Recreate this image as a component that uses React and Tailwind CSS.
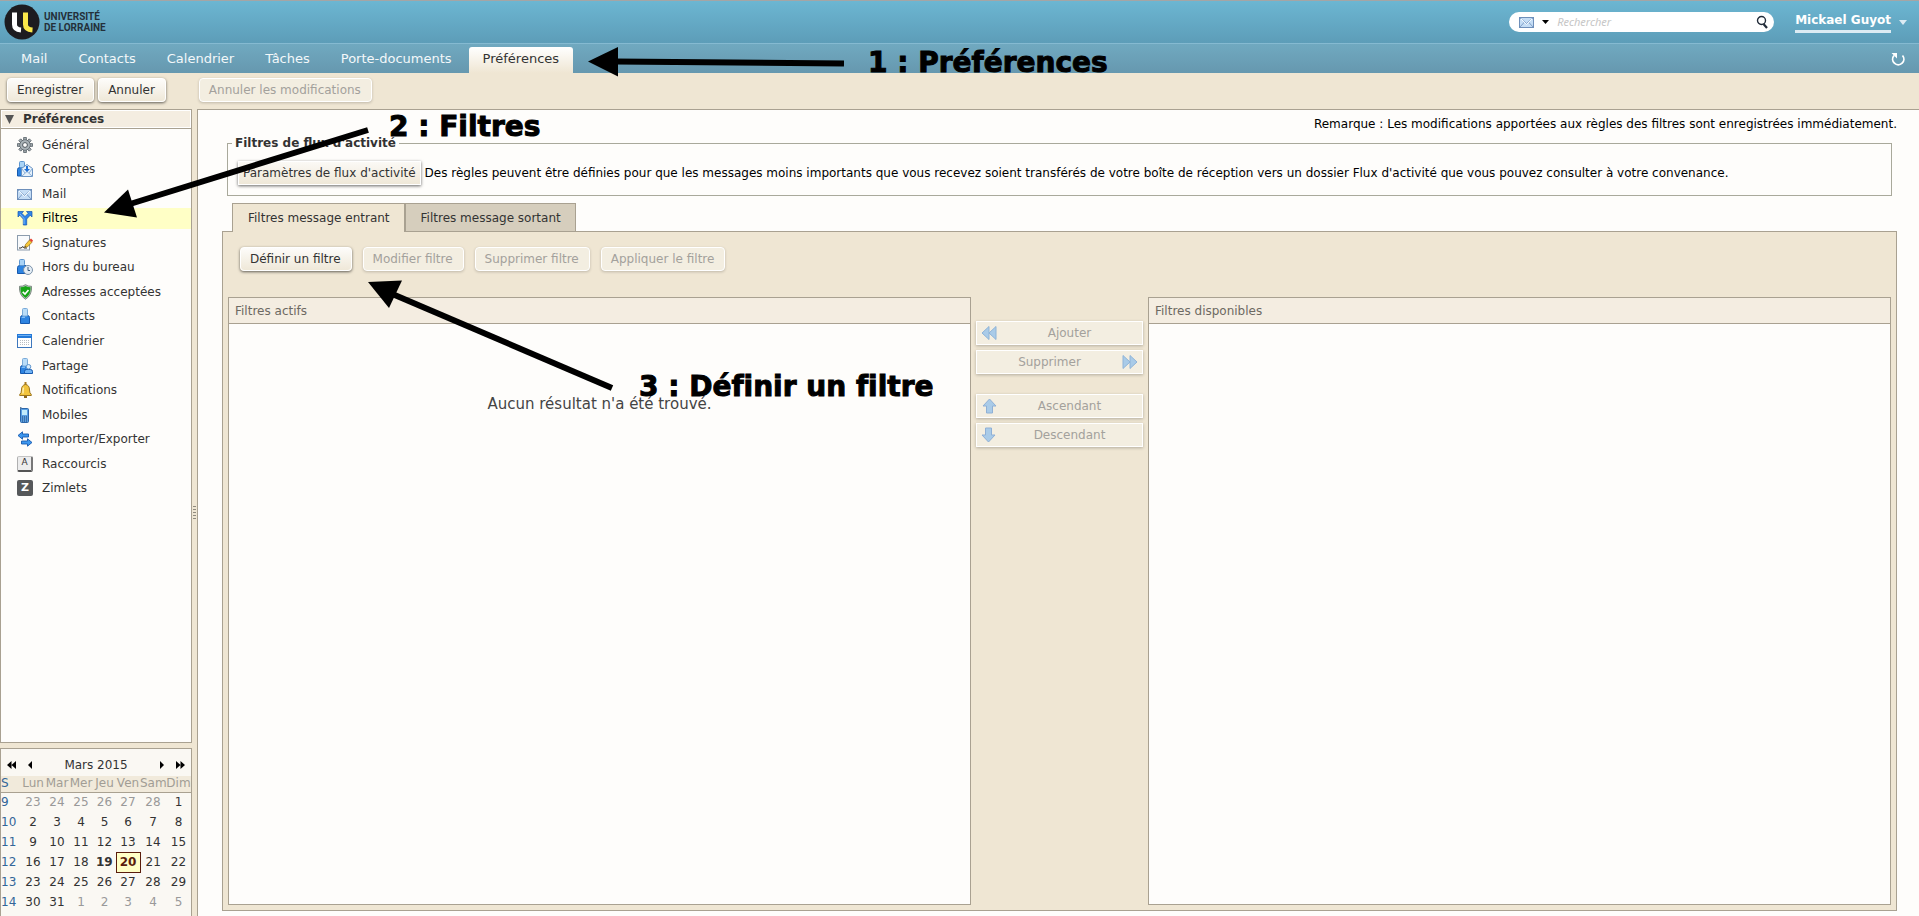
const NAV = ["Mail", "Contacts", "Calendrier", "Tâches", "Porte-documents", "Préférences"];

const DAYS = ["Lun", "Mar", "Mer", "Jeu", "Ven", "Sam", "Dim"];

const WEEKS = [
  { no: 9, days: [23, 24, 25, 26, 27, 28, 1] },
  { no: 10, days: [2, 3, 4, 5, 6, 7, 8] },
  { no: 11, days: [9, 10, 11, 12, 13, 14, 15] },
  { no: 12, days: [16, 17, 18, 19, 20, 21, 22] },
  { no: 13, days: [23, 24, 25, 26, 27, 28, 29] },
  { no: 14, days: [30, 31, 1, 2, 3, 4, 5] },
];

/* ---------- Icons ---------- */

function Icon({ children, className = "" }) {
  return (
    <svg width="16" height="16" viewBox="0 0 16 16" aria-hidden="true" className={`shrink-0 ${className}`}>
      {children}
    </svg>
  );
}

// small blue figure shared by several entries
function Person() {
  return (
    <g>
      <path d="M3.500 15.500V9.500Q3.500 7.500 5.500 7.500H10.500Q12.500 7.500 12.500 9.500V15.500Z" fill="#2d83e0" stroke="#1659ae" />
      <path d="M4.500 10Q4.500 8.500 6 8.500H8V10Z" fill="#7fbcf6" />
      <rect x="5.500" y="0.500" width="5" height="7.500" rx="1" fill="#b9dcf8" stroke="#7aaad8" />
    </g>
  );
}

function GearIcon() {
  return (
    <Icon>
      <g fill="#aab3b8" stroke="#5c656b" strokeWidth="0.9">
        {[0, 45, 90, 135, 180, 225, 270, 315].map((a) => (
          <rect key={a} x="6.700" y="0.600" width="2.600" height="4" transform={`rotate(${a} 8 8)`} />
        ))}
        <circle cx="8" cy="8" r="5.200" />
      </g>
      <circle cx="8" cy="8" r="4.600" fill="#a9b2b7" />
      <circle cx="8" cy="8" r="2.400" fill="#fff" stroke="#4d565c" />
    </Icon>
  );
}

function AccountsIcon() {
  return (
    <Icon>
      <path d="M0.500 15V8.500Q0.500 6.500 3 6.500H8V15Z" fill="#2d83e0" stroke="#1659ae" />
      <rect x="2.500" y="0.500" width="5" height="6" rx="1" fill="#a9d3f6" stroke="#5d95ce" />
      <path d="M4.500 7.500L10 3.500L15.500 7.500V15.500H4.500Z" fill="#e6f1fb" stroke="#6a94c4" />
      <path d="M5 15L10 10.500L15 15M5 8L8 12M15 8L12 12" fill="none" stroke="#8bb0d8" />
      <path d="M9 5H11V8H13L10 11L7 8H9Z" fill="#1f6fd4" />
    </Icon>
  );
}

function MailIcon({ className }) {
  return (
    <Icon className={className}>
      <rect x="0.500" y="3.500" width="14" height="10" fill="#c5ddf5" stroke="#6e8fba" />
      <path d="M1 4L7.500 9.500L14 4M1 13L5.500 8M14 13L9.500 8" fill="none" stroke="#7f9fc8" />
      <path d="M2 5L7.500 10.500L13 5" fill="none" stroke="#f4f9fe" />
    </Icon>
  );
}

function FilterIcon() {
  return (
    <Icon>
      <path
        d="M1 1.500H6.500L4.800 3.300L8 6.500L11.200 3.300L9.500 1.500H15V7L13.200 5.200L9.700 9V15H6.300V9L2.800 5.200L1 7Z"
        fill="#2e86ea"
        stroke="#1555ad"
        strokeWidth="0.7"
      />
      <path d="M3 4L7 8.500V14" fill="none" stroke="#7db8f6" />
    </Icon>
  );
}

function SignatureIcon() {
  return (
    <Icon>
      <rect x="0.500" y="0.500" width="12" height="14.500" fill="#f8fafc" stroke="#8c9cad" />
      <path d="M2 13H4L6 11.500L7 13H10" fill="none" stroke="#333" />
      <path d="M7.500 12.500L8.500 9.500L12.500 5L15 7.300L10.700 11.700Z" fill="#f6c739" stroke="#946d15" strokeWidth="0.7" />
      <path d="M12.500 5L14 3.500L16 5.500L15 7.200Z" fill="#e4402f" />
      <path d="M7.500 12.500L8 11L9 12Z" fill="#222" />
    </Icon>
  );
}

function AwayIcon() {
  return (
    <Icon>
      <path d="M0.500 14.500V8.500Q0.500 6.500 3 6.500H9V14.500Z" fill="#2d83e0" stroke="#1659ae" />
      <rect x="2.500" y="0.500" width="5" height="6" rx="1" fill="#a9d3f6" stroke="#5d95ce" />
      <circle cx="11" cy="11" r="4.500" fill="#e4edf5" stroke="#7d93aa" />
      <path d="M11 8V11.500H13" fill="none" stroke="#3c5d80" />
    </Icon>
  );
}

function ShieldIcon() {
  return (
    <Icon>
      <path
        d="M8.500 0.700Q11 2.500 14.500 2.300Q15.300 11 8.500 15.300Q1.700 11 2.500 2.300Q6 2.500 8.500 0.700Z"
        fill="#b9c9c0"
        stroke="#66736b"
        strokeWidth="0.8"
      />
      <path d="M8.500 2Q10.800 3.300 13.600 3.300Q13.900 10.700 8.500 14Q3.100 10.700 3.400 3.300Q6.200 3.300 8.500 2Z" fill="#17a517" />
      <path d="M5.700 7.800L8 10L11.500 6" fill="none" stroke="#fff" strokeWidth="1.600" />
    </Icon>
  );
}

function CalendarIcon() {
  return (
    <Icon>
      <rect x="0.500" y="1.500" width="14" height="13" fill="#fff" stroke="#3f78bd" />
      <rect x="0" y="1" width="15" height="4" fill="#2479d8" />
      <rect x="1" y="2" width="13" height="1" fill="#6eb0f2" />
      <path d="M3 7.500H13M3 9.500H13M3 11.500H13" stroke="#b9bec4" strokeDasharray="1 1" />
    </Icon>
  );
}

function SharingIcon() {
  return (
    <Icon>
      <Person />
      <path d="M7.500 15.500V13.500Q7.500 11.500 9.500 11.500H13.500Q15.500 11.500 15.500 13.500V15.500Z" fill="#6fb2f4" stroke="#1659ae" />
      <circle cx="11.500" cy="8.800" r="2.300" fill="#d6eafb" stroke="#5d95ce" />
    </Icon>
  );
}

function BellIcon() {
  return (
    <Icon>
      <rect x="7.500" y="0" width="2" height="3" fill="#a77b20" />
      <path
        d="M8.500 2.500Q12.500 3 12.500 8Q12.500 11 14.300 12.500V13.500H2.700V12.500Q4.500 11 4.500 8Q4.500 3 8.500 2.500Z"
        fill="#f2c43d"
        stroke="#9a7420"
      />
      <path d="M6.500 5.500Q5.800 8 6 11.500" fill="none" stroke="#fdeeb0" strokeWidth="1.500" />
      <rect x="7" y="14" width="3" height="2" fill="#8a661b" />
    </Icon>
  );
}

function PhoneIcon() {
  return (
    <Icon>
      <rect x="3" y="0" width="1.500" height="4" fill="#64809e" />
      <rect x="3.500" y="1.500" width="8" height="14" rx="1" fill="#5a9fe3" stroke="#2b66a9" />
      <rect x="5" y="3" width="5" height="5" fill="#c3ecfb" />
      <path d="M5 10H10M5 12H10M5 14H10" stroke="#24456b" strokeDasharray="1 1" />
    </Icon>
  );
}

function ImportIcon() {
  return (
    <Icon>
      <g fill="#3d97ef" stroke="#1659ae" strokeWidth="0.9">
        <path d="M1 4.500L5.500 0.800V3H11.500V6H5.500V8.200Z" />
        <path d="M15 11.500L10.500 7.800V10H4.500V13H10.500V15.200Z" />
      </g>
    </Icon>
  );
}

function KeyIcon() {
  return (
    <span
      aria-hidden="true"
      className="flex h-4 w-4 shrink-0 items-start justify-center rounded-[2px] border border-t-[#c4c4c4] border-l-[#b0b0b0] border-r-2 border-b-2 border-r-[#777] border-b-[#555] bg-[#ededed] text-[9px] leading-[11px] text-[#333]"
    >
      A
    </span>
  );
}

function ZimletIcon() {
  return (
    <span
      aria-hidden="true"
      className="flex h-4 w-4 shrink-0 items-center justify-center rounded-[2px] bg-[#56585a] text-[11px] leading-4 font-bold text-white"
    >
      Z
    </span>
  );
}

const PREFS = [
  { label: "Général", icon: <GearIcon /> },
  { label: "Comptes", icon: <AccountsIcon /> },
  { label: "Mail", icon: <MailIcon /> },
  { label: "Filtres", icon: <FilterIcon /> },
  { label: "Signatures", icon: <SignatureIcon /> },
  { label: "Hors du bureau", icon: <AwayIcon /> },
  { label: "Adresses acceptées", icon: <ShieldIcon /> },
  { label: "Contacts", icon: <Icon><Person /></Icon> },
  { label: "Calendrier", icon: <CalendarIcon /> },
  { label: "Partage", icon: <SharingIcon /> },
  { label: "Notifications", icon: <BellIcon /> },
  { label: "Mobiles", icon: <PhoneIcon /> },
  { label: "Importer/Exporter", icon: <ImportIcon /> },
  { label: "Raccourcis", icon: <KeyIcon /> },
  { label: "Zimlets", icon: <ZimletIcon /> },
];

/* ---------- Controls ---------- */

function Button({ children, disabled }) {
  return (
    <button
      disabled={disabled}
      className={`h-6 rounded-[4px] border border-white pr-[10px] pl-[9px] whitespace-nowrap ${
        disabled
          ? "bg-[#f3eee1] text-[#a3a19c] shadow-[0_1px_3px_rgba(0,0,0,0.2)]"
          : "bg-linear-to-b from-[#fdfcfa] to-[#efe8d8] text-[#333] shadow-[0_1px_3px_rgba(0,0,0,0.6)]"
      }`}
    >
      {children}
    </button>
  );
}

function MoveButton({ children, icon, iconRight }) {
  return (
    <button
      disabled
      className={`flex h-6 items-center gap-1 border border-white bg-[#f3eee1] px-1 text-[#a3a19c] shadow-[0_1px_3px_rgba(0,0,0,0.25)] ${
        iconRight ? "flex-row-reverse" : ""
      }`}
    >
      {icon}
      <span className="flex-1 text-center">{children}</span>
    </button>
  );
}

function FilterList({ title, children }) {
  return (
    <section className="min-w-0 flex-1 border border-[#a9a191] bg-[#fefdfb]">
      <h2 className="h-[26px] border-b border-[#a9a191] bg-[#f4ede1] pl-1.5 leading-[26px] text-[#6d6962]">{title}</h2>
      {children}
    </section>
  );
}

/* ---------- Page parts ---------- */

function Header() {
  return (
    <header>
      <div className="flex h-[43px] items-center justify-between border-t border-[#a5a5a5] bg-linear-to-b from-[#6cb6d2] to-[#5d9db8]">
        <a href="#" className="flex items-center gap-1 pl-1">
          <svg width="36" height="36" viewBox="0 0 36 36" aria-hidden="true">
            <circle cx="18" cy="18" r="17.500" fill="#1d1c20" />
            <path d="M10.500 8.500V20.500Q10.500 25.500 17 26" fill="none" stroke="#fff" strokeWidth="5" />
            <path d="M21.500 8.500V20.500Q21.500 25.500 28.500 26" fill="none" stroke="#fbe84a" strokeWidth="5" />
          </svg>
          <span className="font-['Roboto',sans-serif] text-[10px] leading-[11px] font-bold text-[#24303a]">
            UNIVERSITÉ
            <br />
            DE LORRAINE
          </span>
        </a>

        <div className="flex items-center gap-[21px] pr-3">
          <div className="flex h-5 w-[265px] items-center rounded-full bg-white pr-[5px] pl-[10px]">
            <MailIcon />
            <svg width="7" height="4" viewBox="0 0 7 4" aria-hidden="true" className="ml-[7px]">
              <path d="M0 0H7L3.500 4Z" fill="#000" />
            </svg>
            <input
              aria-label="Rechercher"
              placeholder="Rechercher"
              className="ml-2 min-w-0 flex-1 bg-transparent font-['Noto_Sans',sans-serif] text-[11px] italic outline-none placeholder:text-[#c6c6c6]"
            />
            <svg width="13" height="15" viewBox="0 0 13 15" aria-hidden="true">
              <circle cx="5.500" cy="5.500" r="4" fill="none" stroke="#222c3a" strokeWidth="1.400" />
              <path d="M7.500 9L11 13" stroke="#222c3a" strokeWidth="2.200" />
            </svg>
          </div>
          <button className="flex items-center gap-2 font-bold text-white">
            <span className="border-b-[3px] border-[#dcebf3] pb-[2px] leading-4">Mickael Guyot</span>
            <svg width="8" height="5" viewBox="0 0 8 5" aria-hidden="true">
              <path d="M0 0H8L4 5Z" fill="#dcebf3" />
            </svg>
          </button>
        </div>
      </div>

      <nav className="flex h-[30px] items-end justify-between border-t border-[#85bad1] bg-linear-to-b from-[#70a9c0] to-[#6698af] pr-[13px] pl-[7px]">
        <div className="flex gap-[3px] text-[13px]">
          {NAV.map((item) => (
            <a
              key={item}
              href="#"
              className={`h-[26px] rounded-t-[3px] px-[14px] leading-6 ${
                item === "Préférences" ? "bg-linear-to-b from-white to-[#efe6d3] text-[#333]" : "text-[#f3f8fa]"
              }`}
            >
              {item}
            </a>
          ))}
        </div>
        <button aria-label="Actualiser" className="pb-1.5">
          <svg width="16" height="15" viewBox="0 0 16 15" aria-hidden="true">
            <path d="M4 3.500A5.600 5.600 0 1 0 12.500 3.500" fill="none" stroke="#fff" strokeWidth="1.800" />
            <path d="M1.500 1H7V6.500Z" fill="#fff" />
          </svg>
        </button>
      </nav>
    </header>
  );
}

function MiniCalendar() {
  const cellClass = (no, index, day) => {
    if (no === 12 && day === 20) return "border border-[#5a1d0c] bg-[#ffffc6] font-bold text-[#5a1d0c]";
    if (no === 12 && day === 19) return "font-bold";
    if ((no === 9 && index < 6) || (no === 14 && index > 1)) return "text-[#999]";
    return "";
  };

  return (
    <div className="overflow-hidden border border-b-0 border-[#a9a191] bg-[#faf8f3] pb-1">
      <div className="flex h-[27px] items-center px-1.5 pt-1">
        <button aria-label="Année précédente">
          <svg width="9" height="8" viewBox="0 0 9 8"><path d="M4.500 0V8L0 4ZM9 0V8L4.500 4Z" /></svg>
        </button>
        <button aria-label="Mois précédent" className="ml-3">
          <svg width="4" height="8" viewBox="0 0 4 8"><path d="M4 0V8L0 4Z" /></svg>
        </button>
        <span className="flex-1 text-center">Mars 2015</span>
        <button aria-label="Mois suivant" className="mr-3">
          <svg width="4" height="8" viewBox="0 0 4 8"><path d="M0 0V8L4 4Z" /></svg>
        </button>
        <button aria-label="Année suivante">
          <svg width="9" height="8" viewBox="0 0 9 8"><path d="M0 0V8L4.500 4ZM4.500 0V8L9 4Z" /></svg>
        </button>
      </div>

      <table className="w-full table-fixed border-collapse text-center">
        <colgroup>
          <col className="w-[20px]" />
          <col className="w-[24px]" />
          <col className="w-[24px]" />
          <col className="w-[24px]" />
          <col className="w-[23px]" />
          <col className="w-[24px]" />
          <col className="w-[26px]" />
          <col className="w-[25px]" />
        </colgroup>
        <thead>
          <tr className="h-4 border-b border-[#a9a191] bg-[#f1eadb] leading-[15px] text-[#a19d95]">
            <th className="p-0 text-left font-normal text-[#336699]">S</th>
            {DAYS.map((d) => (
              <th key={d} className="p-0 font-normal whitespace-nowrap">
                {d}
              </th>
            ))}
          </tr>
        </thead>
        <tbody className="leading-[18px]">
          {WEEKS.map((week) => (
            <tr key={week.no} className="h-5">
              <th className="p-0 text-left font-normal text-[#336699]">{week.no}</th>
              {week.days.map((day, i) => (
                <td key={i} className={`p-0 ${cellClass(week.no, i, day)}`}>
                  {day}
                </td>
              ))}
            </tr>
          ))}
        </tbody>
      </table>
    </div>
  );
}

function Sidebar() {
  return (
    <aside className="flex w-[192px] shrink-0 flex-col gap-[5px]">
      <div className="flex-1 border border-[#a9a191] bg-[#fefdfb]">
        <h2 className="flex h-[19px] items-center gap-[9px] border-b border-[#a9a191] bg-[#f4ede1] pl-1 font-bold shadow-[inset_0_0_0_1px_#fff]">
          <svg width="9" height="9" viewBox="0 0 9 9" aria-hidden="true">
            <path d="M0 0H9L4.500 9Z" fill="#555" />
          </svg>
          Préférences
        </h2>
        <div className="flex h-[370px] flex-col justify-between pt-[5px]">
          {PREFS.map((pref) => (
            <a
              key={pref.label}
              href="#"
              className={`flex h-[21px] items-center gap-[9px] pl-4 ${
                pref.label === "Filtres" ? "bg-[#ffffc6] text-black" : ""
              }`}
            >
              {pref.icon}
              {pref.label}
            </a>
          ))}
        </div>
      </div>

      <MiniCalendar />
    </aside>
  );
}

function Filters() {
  return (
    <main className="flex min-w-0 flex-1 flex-col border-t border-l border-[#a9a191] bg-[#fefdfb] pt-1.5 pr-[22px] pb-[5px] pl-6">
      <p className="text-right leading-4 text-black">
        Remarque : Les modifications apportées aux règles des filtres sont enregistrées immédiatement.
      </p>

      <fieldset className="mx-[5px] mt-[3px] border border-[#a9a99b] px-[10px] py-[10px]">
        <legend className="-ml-1.5 px-[3px] leading-4 font-bold">Filtres de flux d'activité</legend>
        <div className="flex items-center gap-1">
          <button className="h-6 shrink-0 border border-white bg-linear-to-b from-[#fbf9f5] to-[#efe8d8] px-1 shadow-[0_1px_3px_rgba(0,0,0,0.6)]">
            Paramètres de flux d'activité
          </button>
          <p className="text-black">
            Des règles peuvent être définies pour que les messages moins importants que vous recevez soient transférés
            de votre boîte de réception vers un dossier Flux d'activité que vous pouvez consulter à votre convenance.
          </p>
        </div>
      </fieldset>

      <div className="z-10 mt-[7px] -mb-px flex pl-[10px]">
        <button className="h-[29px] border border-b-0 border-[#a9a191] bg-[#efe6d3] pr-[14px] pl-[15px]">
          Filtres message entrant
        </button>
        <button className="h-[29px] border border-[#a9a191] bg-[#d6cebd] pr-[14px] pl-[15px]">
          Filtres message sortant
        </button>
      </div>

      <div className="flex flex-1 flex-col border border-[#a9a191] bg-[#efe6d3] px-[5px] pt-[15px] pb-[5px]">
        <div className="flex gap-[11px] pl-3">
          <Button>Définir un filtre</Button>
          <Button disabled>Modifier filtre</Button>
          <Button disabled>Supprimer filtre</Button>
          <Button disabled>Appliquer le filtre</Button>
        </div>

        <div className="mt-[26px] flex flex-1">
          <FilterList title="Filtres actifs">
            <p className="pt-[70px] text-center text-[15px] leading-5 text-[#444]">Aucun résultat n'a été trouvé.</p>
          </FilterList>

          <div className="flex w-[177px] shrink-0 flex-col gap-[5px] px-[5px] pt-6">
            <MoveButton
              icon={
                <Icon>
                  <path d="M8 1.500V14.500L1 8ZM15 1.500V14.500L8 8Z" fill="#a9cbe8" stroke="#8fb4d8" />
                </Icon>
              }
            >
              Ajouter
            </MoveButton>
            <MoveButton
              iconRight
              icon={
                <Icon>
                  <path d="M1 1.500V14.500L8 8ZM8 1.500V14.500L15 8Z" fill="#a9cbe8" stroke="#8fb4d8" />
                </Icon>
              }
            >
              Supprimer
            </MoveButton>
            <div className="h-[10px]" />
            <MoveButton
              icon={
                <Icon>
                  <path d="M8.500 1L15 8H11.500V15H5.500V8H2Z" fill="#a9cbe8" stroke="#8fb0d6" />
                </Icon>
              }
            >
              Ascendant
            </MoveButton>
            <MoveButton
              icon={
                <Icon>
                  <path d="M7.500 15L14 8H10.500V1H4.500V8H1Z" fill="#a9cbe8" stroke="#8fb0d6" />
                </Icon>
              }
            >
              Descendant
            </MoveButton>
          </div>

          <FilterList title="Filtres disponibles" />
        </div>
      </div>
    </main>
  );
}

// numbered steps drawn over the page
function Steps() {
  return (
    <div className="pointer-events-none absolute inset-0 z-20 text-[28px] leading-10 font-bold whitespace-nowrap text-black [-webkit-text-stroke:1px_#000] [font-variant-ligatures:none]">
      <svg className="absolute inset-0 h-full w-full" aria-hidden="true">
        <g stroke="#000" strokeWidth="6">
          <path d="M612 388L390 293" />
          <path d="M368 130L130 204" />
          <path d="M844 63.500L615 61.500" />
        </g>
        <path d="M588 61.500L618 47V76.500Z" />
        <path d="M104 212.500L128 189.500L137 217.500Z" />
        <path d="M368 282L402 280.500L389 308Z" />
      </svg>
      <span className="absolute top-[43px] left-[868px]">1 : Préférences</span>
      <span className="absolute top-[107px] left-[389px]">2 : Filtres</span>
      <span className="absolute top-[367px] left-[639px]">3 : Définir un filtre</span>
    </div>
  );
}

export default function App() {
  return (
    <div className="relative flex h-screen flex-col overflow-hidden bg-[#efe6d3] font-['DejaVu_Sans',sans-serif] text-[12px] leading-4 text-[#333]">
      <Header />

      {/* Toolbar */}
      <div className="flex h-9 shrink-0 items-start gap-1 pt-[5px] pl-[7px]">
        <Button>Enregistrer</Button>
        <Button>Annuler</Button>
        <div className="ml-[29px]">
          <Button disabled>Annuler les modifications</Button>
        </div>
      </div>

      <div className="flex min-h-0 flex-1">
        <Sidebar />

        {/* Splitter */}
        <div className="flex w-[5px] shrink-0 flex-col items-center justify-center gap-[2px]">
          <i className="h-px w-[3px] bg-[#8f8a7e]" />
          <i className="h-px w-[3px] bg-[#8f8a7e]" />
          <i className="h-px w-[3px] bg-[#8f8a7e]" />
          <i className="h-px w-[3px] bg-[#8f8a7e]" />
          <i className="h-px w-[3px] bg-[#8f8a7e]" />
        </div>

        <Filters />
      </div>

      <Steps />
    </div>
  );
}
